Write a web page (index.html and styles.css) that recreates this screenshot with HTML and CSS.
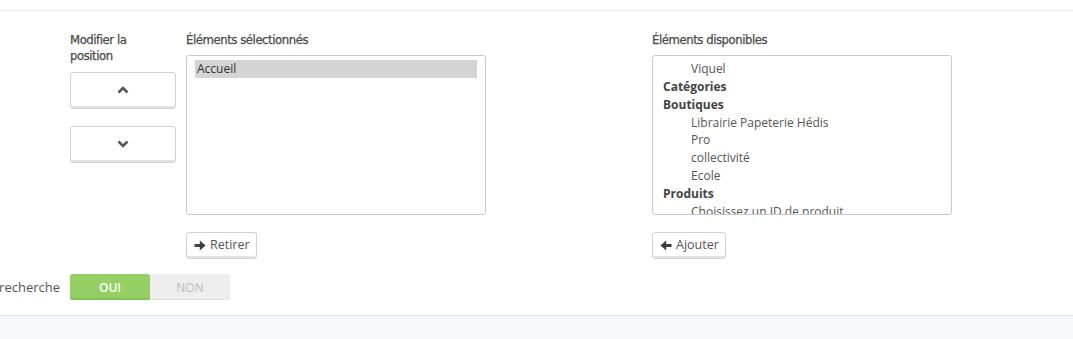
FILE: index.html
```html
<!DOCTYPE html>
<html lang="fr">
<head>
<meta charset="utf-8">
<title>Position</title>
<link rel="stylesheet" href="styles.css">
</head>
<body>
<div class="panel">
  <div class="columns">
    <div class="col col-pos">
      <div class="label">Modifier la position</div>
      <button class="btn btn-move" type="button" aria-label="Monter">
        <svg width="12" height="8" viewBox="0 0 12 8"><path d="M1.5 6.5 L6 2 L10.5 6.5" fill="none" stroke="#555" stroke-width="2.6"/></svg>
      </button>
      <button class="btn btn-move btn-down" type="button" aria-label="Descendre">
        <svg width="12" height="8" viewBox="0 0 12 8"><path d="M1.5 1.5 L6 6 L10.5 1.5" fill="none" stroke="#555" stroke-width="2.6"/></svg>
      </button>
    </div>
    <div class="col col-list">
      <div class="label">Éléments sélectionnés</div>
      <div class="listbox">
        <div class="opt selected">Accueil</div>
      </div>
      <button class="btn btn-small" type="button">
        <svg width="12" height="11" viewBox="0 0 12 11"><path d="M0.5 4 H5.8 V0.6 L11.6 5.5 L5.8 10.4 V7 H0.5 Z" fill="#3f3f3f"/></svg>
        <span>Retirer</span>
      </button>
    </div>
    <div class="col col-list col-avail">
      <div class="label">Éléments disponibles</div>
      <div class="listbox">
        <div class="opt sub">Viquel</div>
        <div class="opt group">Catégories</div>
        <div class="opt group">Boutiques</div>
        <div class="opt sub">Librairie Papeterie Hédis</div>
        <div class="opt sub">Pro</div>
        <div class="opt sub">collectivité</div>
        <div class="opt sub">Ecole</div>
        <div class="opt group">Produits</div>
        <div class="opt sub">Choisissez un ID de produit</div>
      </div>
      <button class="btn btn-small" type="button">
        <svg width="12" height="11" viewBox="0 0 12 11"><path d="M11.5 4 H6.2 V0.6 L0.4 5.5 L6.2 10.4 V7 H11.5 Z" fill="#3f3f3f"/></svg>
        <span>Ajouter</span>
      </button>
    </div>
  </div>
  <div class="form-row">
    <div class="form-label"><span>Afficher dans la recherche</span></div>
    <div class="switch">
      <span class="sw sw-on">OUI</span>
      <span class="sw sw-off">NON</span>
    </div>
  </div>
</div>
<div class="footer"></div>
</body>
</html>
```

FILE: styles.css
```css
html, body {
  margin: 0;
  padding: 0;
  background: #fff;
}
body {
  font-family: "Open Sans", "Liberation Sans", sans-serif;
  font-size: 12px;
  color: #555;
  width: 1073px;
  height: 339px;
  overflow: hidden;
}
.panel {
  margin-top: 10px;
  border-top: 1px solid #eeeeee;
  padding-top: 21px;
  height: 283px;
  box-sizing: border-box;
}
.columns {
  display: flex;
  padding-left: 70px;
}
.col {
  display: flex;
  flex-direction: column;
  align-items: flex-start;
}
.col-pos {
  width: 106px;
  margin-right: 10px;
}
.col-list {
  width: 300px;
}
.col-avail {
  margin-left: 166px;
}
.label {
  font-family: "DejaVu Sans Condensed", "Liberation Sans Narrow", "Liberation Sans", sans-serif;
  font-stretch: condensed;
  font-size: 13px;
  letter-spacing: -0.45px;
  line-height: 16px;
  font-weight: 400;
  color: #4a4a4a;
  -webkit-text-stroke: 0.25px #4a4a4a;
  margin-bottom: 7px;
}
.col-pos .label {
  width: 80px;
  margin-bottom: 8px;
}
.btn {
  background: #fff;
  border: 1px solid #d0d0d0;
  border-radius: 3px;
  box-shadow: inset 0 -2px 0 #e4e4e4;
  padding: 0;
  margin: 0;
  font-family: "Open Sans", "Liberation Sans", sans-serif;
  color: #555;
  cursor: pointer;
  display: flex;
  align-items: center;
  justify-content: center;
}
.btn-move {
  width: 106px;
  height: 37px;
  padding-bottom: 2px;
}
.btn-down {
  margin-top: 17px;
}
.listbox {
  width: 300px;
  height: 160px;
  box-sizing: border-box;
  border: 1px solid #c9c9c9;
  border-radius: 3px;
  padding: 4px 8px;
  overflow: hidden;
  background: #fff;
}
.opt {
  font-size: 12px;
  line-height: 17.86px;
  padding: 0 2px;
  color: #555;
  white-space: nowrap;
}
.opt.selected {
  background: #d4d4d4;
  color: #333;
}
.opt.sub {
  padding-left: 30px;
}
.opt.group {
  font-weight: 700;
  color: #444;
}
.btn-small {
  margin-top: 17px;
  height: 27px;
  padding: 0 6px 1px 7px;
  gap: 4px;
  font-size: 12.5px;
  color: #555;
}
.btn-small span {
  line-height: 16px;
}
.form-row {
  display: flex;
  align-items: center;
  margin-top: 15px;
}
.form-label {
  width: 60px;
  margin-right: 10px;
  display: flex;
  justify-content: flex-end;
  white-space: nowrap;
  font-size: 13px;
  color: #555;
}
.switch {
  display: flex;
  width: 160px;
  height: 26px;
  border-radius: 3px;
  background: #eeeeee;
  box-shadow: inset 0 -1px 0 #e0e0e0;
}
.sw {
  flex: 1;
  display: flex;
  align-items: center;
  justify-content: center;
  font-size: 12px;
  text-transform: uppercase;
}
.sw-on {
  background: #93cf63;
  color: #fff;
  font-weight: 600;
  border-radius: 3px;
  box-shadow: inset 0 -2px 0 #82c152;
}
.sw-off {
  color: #bbb;
}
.footer {
  height: 24px;
  border-top: 1px solid #d6e5ee;
  background: #f5f9fc;
  margin-top: 22px;
}
```
